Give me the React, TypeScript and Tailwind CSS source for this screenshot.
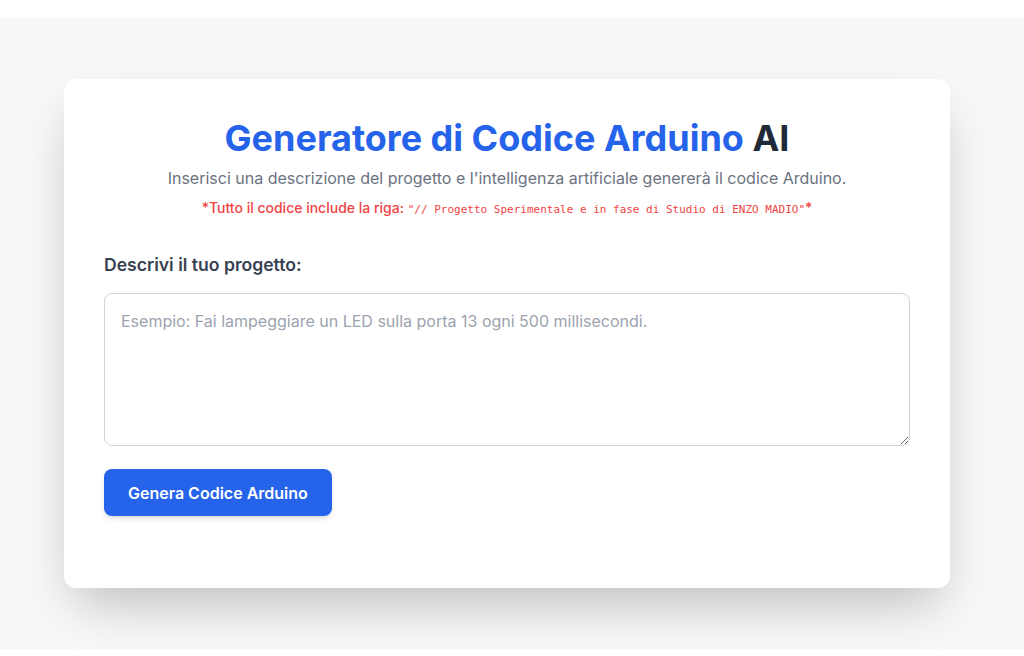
import React from "react";

export default function App() {
  return (
    <div className="w-[1024px] h-[656px] bg-white overflow-hidden" style={{ fontFamily: "Inter, 'Noto Sans', sans-serif" }}>
      <div className="mt-[18px] h-[631px] bg-[#f7f8fa] pt-[61px]">
        <div className="ml-[64px] w-[886px] bg-white rounded-xl shadow-2xl px-[40px] pt-[39px] pb-[72px]">
          <div className="text-center">
            <h1 className="text-[36px] leading-[40px] font-bold text-[#2563eb]">
              Generatore di Codice Arduino <span className="text-[#1f2937]">AI</span>
            </h1>
            <p className="mt-[8px] text-base leading-6 text-[#6b7280]">
              Inserisci una descrizione del progetto e l'intelligenza artificiale genererà il codice Arduino.
            </p>
            <p className="mt-[8px] h-[20px] text-sm leading-5 font-medium text-[#ef4444]">
              *Tutto il codice include la riga:{" "}
              <code className="text-[11px] leading-none font-normal" style={{ fontFamily: "'DejaVu Sans Mono', 'Liberation Mono', monospace" }}>
                "// Progetto Sperimentale e in fase di Studio di ENZO MADIO"
              </code>
              *
            </p>
          </div>
          <label className="block mt-[33px] text-[17.6px] leading-[28px] font-semibold text-[#374151]">
            Descrivi il tuo progetto:
          </label>
          <textarea
            className="block mt-[14px] w-full h-[153px] border border-[#d1d5db] rounded-lg px-4 py-[15px] text-base leading-6 text-[#111827] placeholder:text-[#9ca3af] resize-y outline-none"
            placeholder="Esempio: Fai lampeggiare un LED sulla porta 13 ogni 500 millisecondi."
          />
          <button className="mt-[23px] h-[47px] px-6 rounded-lg bg-[#2563eb] text-white text-base font-semibold shadow-md">
            Genera Codice Arduino
          </button>
        </div>
      </div>
    </div>
  );
}
